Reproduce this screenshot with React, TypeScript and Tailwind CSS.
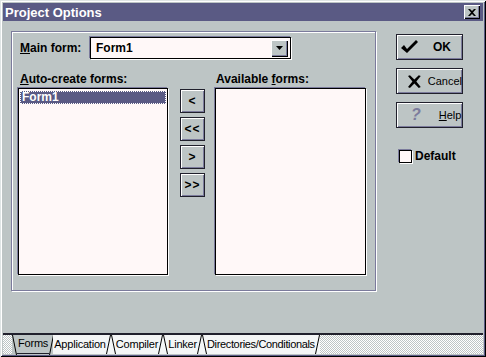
import React from "react";

const font = { fontFamily: '"Liberation Sans", Arial, sans-serif' };

function Slant({ dir, h = 20 }: { dir: "l" | "r"; h?: number }) {
  return (
    <svg width="5" height={h} viewBox={`0 0 5 ${h}`} className="shrink-0 block">
      {dir === "l" ? (
        <line x1="0.5" y1="0" x2="4.5" y2={h} stroke="#000" strokeWidth="1" />
      ) : (
        <line x1="4.5" y1="0" x2="0.5" y2={h} stroke="#000" strokeWidth="1" />
      )}
    </svg>
  );
}

function ArrowBtn({ label }: { label: string }) {
  return (
    <div className="w-[25px] h-[24px] bg-[#bdc5c5] border border-[#20202c] shadow-[inset_1px_1px_0_#fff,inset_-1px_-1px_0_#7b7b9c] flex items-center justify-center text-[12px] font-bold text-black leading-none tracking-[1px]">
      {label}
    </div>
  );
}

function BigBtn({ children }: { children: React.ReactNode }) {
  return (
    <div className="w-[67px] h-[26px] bg-[#bdc5c5] border border-[#20202c] shadow-[inset_1px_1px_0_#fff,inset_-1px_-1px_0_#7b7b9c] flex items-center text-black">
      {children}
    </div>
  );
}

export default function App() {
  return (
    <div
      className="w-[486px] h-[357px] bg-[#bdc5c5] flex flex-col p-[3px] shadow-[inset_1px_1px_0_#dfe5e5,inset_-1px_-1px_0_#000,inset_2px_2px_0_#fff,inset_-2px_-2px_0_#5a5a84]"
      style={font}
    >
      {/* Title bar */}
      <div className="h-[18px] bg-[#5a5a84] flex items-center justify-between pl-[2px] pr-[3px] shrink-0">
        <span className="text-white font-bold text-[13px] leading-none">Project Options</span>
        <div className="w-[16px] h-[14px] bg-[#bdc5c5] shadow-[inset_1px_1px_0_#fff,inset_-1px_-1px_0_#000,inset_-2px_-2px_0_#7b7b9c] flex items-center justify-center">
          <svg width="8" height="7" viewBox="0 0 8 7">
            <path d="M0 0 L2 0 L4 2 L6 0 L8 0 L5 3.5 L8 7 L6 7 L4 5 L2 7 L0 7 L3 3.5 Z" fill="#000" />
          </svg>
        </div>
      </div>

      {/* Body */}
      <div className="flex-1 flex pl-[8px] pt-[10px]">
        {/* Panel */}
        <div className="w-[365px] h-[260px] border border-[#7b7b9c] shadow-[inset_1px_1px_0_#fff,1px_1px_0_#fff] px-[6px] pt-[5px] flex flex-col">
          <div className="flex items-center h-[22px] ml-[2px]">
            <span className="text-[12px] font-bold w-[70px]">
              <span className="underline">M</span>ain form:
            </span>
            <div className="w-[201px] h-[22px] bg-[#fff8f8] border border-black shadow-[-1px_-1px_0_#7b7b9c,1px_1px_0_#fff] flex items-center justify-between pl-[5px] pr-[2px]">
              <span className="text-[12px] font-bold">Form1</span>
              <div className="w-[17px] h-[17px] bg-[#bdc5c5] shadow-[inset_1px_1px_0_#fff,inset_-1px_-1px_0_#000,inset_-2px_-2px_0_#7b7b9c] flex items-center justify-center">
                <svg width="7" height="4" viewBox="0 0 7 4">
                  <path d="M0 0 L7 0 L3.5 4 Z" fill="#000" />
                </svg>
              </div>
            </div>
          </div>

          <div className="flex mt-[13px]">
            <div className="flex flex-col w-[150px]">
              <span className="text-[12px] font-bold leading-[14px] ml-[2px]">
                <span className="underline">A</span>uto-create forms:
              </span>
              <div className="mt-[2px] h-[187px] bg-[#fff8f8] border border-black shadow-[-1px_-1px_0_#7b7b9c,1px_1px_0_#fff] p-[1px] pt-[2px]">
                <div className="h-[13px] bg-[#5a5a84] outline outline-1 outline-dotted outline-white -outline-offset-1 text-white text-[12px] font-bold leading-[13px] pl-[2px]">
                  Form1
                </div>
              </div>
            </div>

            <div className="flex flex-col gap-[4px] ml-[12px] mt-[17px]">
              <ArrowBtn label="<" />
              <ArrowBtn label="<<" />
              <ArrowBtn label=">" />
              <ArrowBtn label=">>" />
            </div>

            <div className="flex flex-col w-[151px] ml-[10px]">
              <span className="text-[12px] font-bold leading-[14px] ml-[1px]">
                Available <span className="underline">f</span>orms:
              </span>
              <div className="mt-[2px] h-[187px] bg-[#fff8f8] border border-black shadow-[-1px_-1px_0_#7b7b9c,1px_1px_0_#fff]" />
            </div>
          </div>
        </div>

        {/* Right buttons */}
        <div className="flex flex-col gap-[8px] ml-[20px] pt-[3px]">
          <BigBtn>
            <svg width="20" height="16" viewBox="0 0 20 16" className="ml-[3px]">
              <path d="M1 9 L4 6 L7 10 L16 1 L18 3 L7 14 Z" fill="#000" />
            </svg>
            <span className="ml-[13px] font-bold text-[12px]">OK</span>
          </BigBtn>
          <BigBtn>
            <svg width="13" height="13" viewBox="0 0 13 13" className="ml-[11px]">
              <path d="M0 1 L2 0 L6.5 4.5 L11 0 L13 1 L8.5 6.5 L13 12 L11 13 L6.5 8.5 L2 13 L0 12 L4.5 6.5 Z" fill="#000" />
            </svg>
            <span className="ml-[7px] text-[11px]">Cancel</span>
          </BigBtn>
          <BigBtn>
            <span className="ml-[14px] text-[16px] font-bold italic text-[#7b7b9c] leading-none">?</span>
            <span className="ml-[18px] text-[11px]">
              <span className="underline">H</span>elp
            </span>
          </BigBtn>
          <div className="flex items-center mt-[11px] ml-[3px]">
            <div className="w-[13px] h-[13px] bg-[#fff8f8] border border-black shadow-[-1px_-1px_0_#7b7b9c,1px_1px_0_#fff]" />
            <span className="ml-[3px] text-[12px] font-bold">Default</span>
          </div>
        </div>
      </div>

      {/* Tabs */}
      <div className="h-[21px] shrink-0 border-t-2 border-[#20202c] [background-image:repeating-conic-gradient(#ffffff_0_25%,#bdc5c5_0_50%)] [background-size:2px_2px] flex items-start pl-[9px] text-[11px] tracking-[-0.2px]">
        <div className="flex h-[20px] bg-[#bdc5c5]">
          <Slant dir="l" />
          <div className="border-b border-[#20202c] h-[20px] flex items-center leading-none -mt-[1px] px-[1px]">Forms</div>
          <Slant dir="r" />
        </div>
        <div className="flex h-[19px] items-center bg-[#f4f6f6] -ml-[1px]">
          <span className="leading-none pl-[1px]">Application</span>
          <Slant dir="r" h={19} />
        </div>
        <div className="flex h-[19px] items-center bg-[#f4f6f6]">
          <Slant dir="l" h={19} />
          <span className="leading-none">Compiler</span>
          <Slant dir="r" h={19} />
        </div>
        <div className="flex h-[19px] items-center bg-[#f4f6f6]">
          <Slant dir="l" h={19} />
          <span className="leading-none">Linker</span>
          <Slant dir="r" h={19} />
        </div>
        <div className="flex h-[19px] items-center bg-[#f4f6f6]">
          <Slant dir="l" h={19} />
          <span className="leading-none tracking-[-0.35px]">Directories/Conditionals</span>
          <Slant dir="r" h={19} />
        </div>
      </div>
    </div>
  );
}
